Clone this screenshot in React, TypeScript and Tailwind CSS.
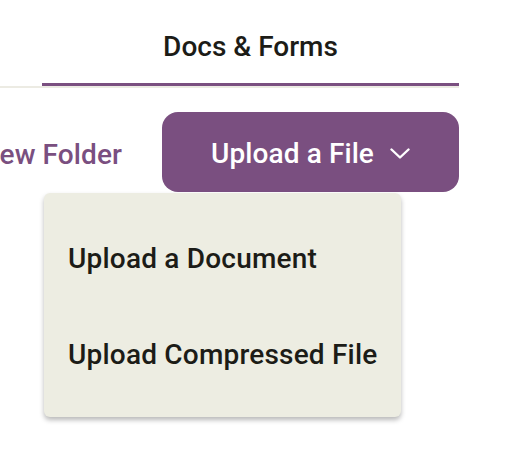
import React from "react";

function Chevron() {
  return (
    <svg width="20" height="12" viewBox="0 0 20 12" fill="none">
      <polyline
        points="1.5,1.5 10,9.5 18.5,1.5"
        stroke="white"
        strokeWidth="2.4"
        strokeLinecap="round"
        strokeLinejoin="round"
      />
    </svg>
  );
}

export default function App() {
  return (
    <div className="h-[450px] w-[505px] overflow-hidden bg-white font-['Roboto',sans-serif] font-medium">
      <div className="flex w-[459px] border-b-2 border-[#ecebe3]">
        <div className="w-[42px]" />
        <div className="flex h-[86px] w-[417px] items-center justify-center border-b-[3px] border-[#7a4f80] pt-[10px] text-[28px] text-[#1c1c17]">
          Docs &amp; Forms
        </div>
      </div>

      <div className="relative mt-[24px] w-[459px]">
        <div className="flex items-center justify-end gap-[40px] overflow-hidden">
          <span className="shrink-0 whitespace-nowrap pt-[6px] text-[28px] tracking-[0.1px] text-[#7a4f80]">
            New Folder
          </span>
          <button className="flex h-[80px] w-[297px] shrink-0 items-center justify-center gap-[16px] whitespace-nowrap rounded-[16px] bg-[#7a4f80] pt-[4px] text-[28px] tracking-[0.1px] text-white">
            <span>Upload a File</span>
            <Chevron />
          </button>
        </div>

        <div className="absolute left-[44px] top-[81px] w-[357px] rounded-[6px] bg-[#edede2] py-[16px] shadow-[0_3px_5px_rgba(0,0,0,0.28)]">
          <div className="flex h-[96px] items-center whitespace-nowrap px-[24px] pt-[4px] text-[28px] tracking-[0.2px] text-[#1c1c17]">
            Upload a Document
          </div>
          <div className="flex h-[96px] items-center whitespace-nowrap px-[24px] pt-[4px] text-[28px] tracking-[0.2px] text-[#1c1c17]">
            Upload Compressed File
          </div>
        </div>
      </div>
    </div>
  );
}
